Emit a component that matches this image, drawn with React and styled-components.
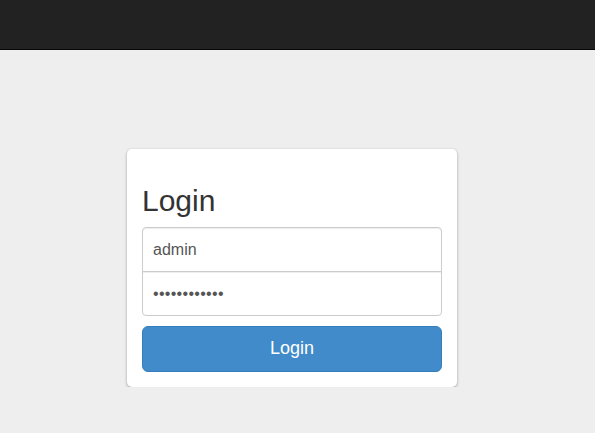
import React from 'react'
import styled, { createGlobalStyle } from 'styled-components'

const GlobalStyle = createGlobalStyle`
  * {
    box-sizing: border-box;
  }
  body {
    margin: 0;
    background: #eee;
    font-family: "Liberation Sans", Arial, sans-serif;
    font-size: 14px;
    color: #333;
  }
`

const Navbar = styled.div`
  height: 50px;
  background: #222;
  border-bottom: 1px solid #080808;
`

const Main = styled.div`
  padding-top: 99px;
  padding-left: 127px;
`

const Card = styled.form`
  width: 330px;
  padding: 15px;
  background: #fff;
  border-radius: 5px;
  box-shadow: 0 1px 3px rgba(0, 0, 0, 0.35);
`

const Heading = styled.h2`
  margin: 20px 0 10px;
  font-size: 30px;
  font-weight: 500;
  line-height: 1.1;
  color: #333;
`

const Input = styled.input`
  display: block;
  width: 100%;
  height: 45px;
  margin: 0;
  margin-bottom: ${({ $last }) => ($last ? '10px' : '-1px')};
  padding: 10px;
  font-family: inherit;
  font-size: 16px;
  letter-spacing: ${({ type }) => (type === 'password' ? '0.3px' : 'normal')};
  color: #555;
  background: #fff;
  border: 1px solid #ccc;
  border-radius: ${({ $last }) => ($last ? '0 0 4px 4px' : '4px 4px 0 0')};
  box-shadow: inset 0 1px 1px rgba(0, 0, 0, 0.075);
  outline: none;
`

const Button = styled.button`
  display: block;
  width: 100%;
  height: 46px;
  padding: 10px 16px;
  font-family: inherit;
  font-size: 18px;
  line-height: 1.33;
  color: #fff;
  background: #428bca;
  border: 1px solid #357ebd;
  border-radius: 6px;
  cursor: pointer;
`

export default function App() {
  return (
    <>
      <GlobalStyle />
      <Navbar />
      <Main>
        <Card onSubmit={e => e.preventDefault()}>
          <Heading>Login</Heading>
          <Input type="text" defaultValue="admin" />
          <Input type="password" defaultValue="adminpass123" $last />
          <Button type="submit">Login</Button>
        </Card>
      </Main>
    </>
  )
}
